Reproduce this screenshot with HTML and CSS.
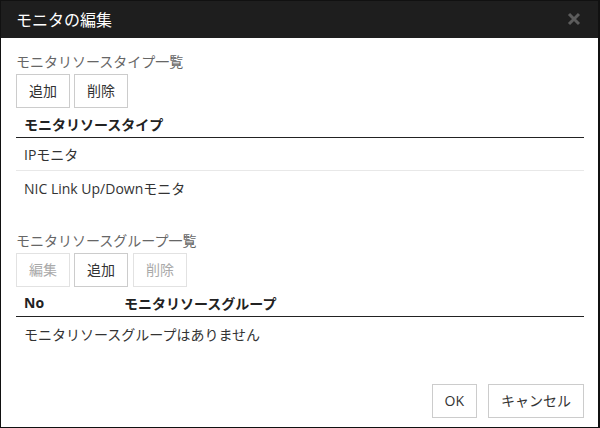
FILE: index.html
```html
<!DOCTYPE html>
<html lang="ja">
<head>
<meta charset="utf-8">
<title>モニタの編集</title>
<link rel="stylesheet" href="styles.css">
</head>
<body>
<div class="dialog">
  <div class="dlg-header">
    <span class="dlg-title">モニタの編集</span>
    <svg class="close" width="14" height="14" viewBox="0 0 14 14"><path d="M2 2L12 12M12 2L2 12" stroke="#5c5c5c" stroke-width="3" fill="none"/></svg>
  </div>
  <div class="dlg-body">
    <div class="section-label">モニタリソースタイプ一覧</div>
    <div class="btn-row">
      <button class="btn">追加</button>
      <button class="btn">削除</button>
    </div>
    <div class="table">
      <div class="thead"><span class="cell">モニタリソースタイプ</span></div>
      <div class="trow"><span class="cell">IPモニタ</span></div>
      <div class="trow"><span class="cell">NIC Link Up/Downモニタ</span></div>
    </div>

    <div class="section-label second">モニタリソースグループ一覧</div>
    <div class="btn-row">
      <button class="btn disabled">編集</button>
      <button class="btn">追加</button>
      <button class="btn disabled">削除</button>
    </div>
    <div class="table">
      <div class="thead"><span class="cell col-no">No</span><span class="cell">モニタリソースグループ</span></div>
      <div class="trow"><span class="cell">モニタリソースグループはありません</span></div>
    </div>

    <div class="footer">
      <button class="btn">OK</button>
      <button class="btn">キャンセル</button>
    </div>
  </div>
</div>
</body>
</html>
```

FILE: styles.css
```css
* { box-sizing: border-box; }
html, body { margin: 0; padding: 0; background: #fff; }
body {
  font-family: "Open Sans", "Noto Sans CJK JP", sans-serif;
  font-size: 14px;
  color: #333;
}
.dialog {
  width: 600px;
  height: 428px;
  border: 1px solid #111;
  border-right-width: 2px;
  display: flex;
  flex-direction: column;
  background: #fff;
}
.dlg-header {
  height: 37px;
  flex: none;
  background: #1e1e1e;
  display: flex;
  align-items: center;
  justify-content: space-between;
  padding: 0 17px 0 15px;
}
.dlg-title {
  color: #fff;
  font-size: 16px;
  line-height: 20px;
}
.close { display: block; margin-top: -1px; }
.dlg-body {
  flex: 1;
  display: flex;
  flex-direction: column;
  padding: 14px 14px 9px 15px;
}
.section-label {
  color: #666;
  font-size: 14px;
  line-height: 20px;
}
.section-label.second { margin-top: 27px; }
.btn-row {
  display: flex;
  gap: 4px;
  margin-top: 2px;
}
.btn {
  font-family: inherit;
  font-size: 14px;
  color: #333;
  background: #fff;
  border: 1px solid #ccc;
  height: 34px;
  padding: 0 12px;
  line-height: 20px;
  margin: 0;
  cursor: pointer;
}
.btn.disabled {
  color: #aaa;
  border-color: #e2e2e2;
}
.btn-row .btn.disabled:last-child { margin-left: 1px; }
.table { margin-top: 2px; }
.thead {
  display: flex;
  height: 28px;
  align-items: center;
  border-bottom: 1px solid #222;
  font-weight: bold;
  color: #222;
}
.trow {
  display: flex;
  height: 33px;
  align-items: center;
  border-bottom: 1px solid #e8e8e8;
}
.trow:last-child { border-bottom: none; }
.cell { padding-left: 8px; }
.col-no { width: 100px; }
.footer {
  margin-top: auto;
  display: flex;
  justify-content: flex-end;
  gap: 11px;
}
```
